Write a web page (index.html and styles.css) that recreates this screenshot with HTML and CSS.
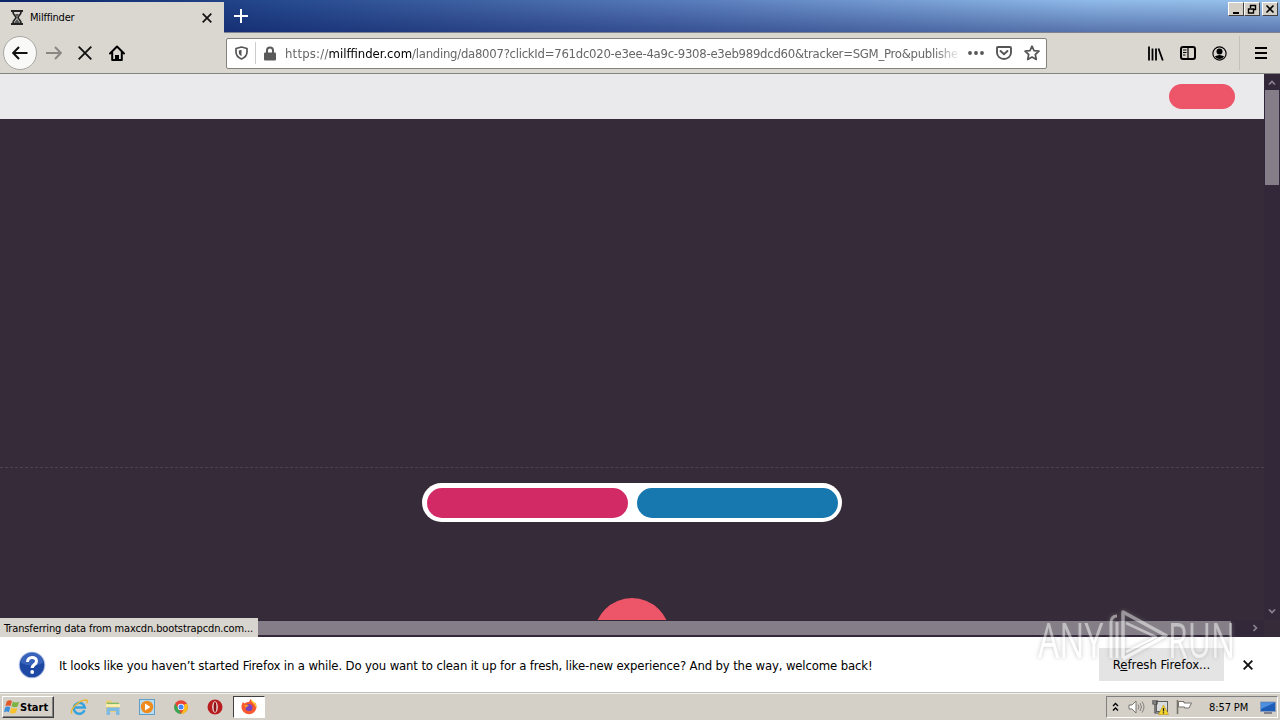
FILE: index.html
```html
<!DOCTYPE html>
<html lang="en">
<head>
    <meta charset="UTF-8">
    <title>Milffinder</title>
    <link rel="stylesheet" href="styles.css">
</head>
<body>
    <div class="titlebar">
        <div class="tab">
            <svg class="tab-icon" width="12" height="15" viewBox="0 0 12 15"><path d="M0 1h12M0 14h12" stroke="#222" stroke-width="2"/><path d="M2 2c0 3 3 4 3 5.500S2 10 2 13M10 2c0 3-3 4-3 5.500s3 2.500 3 5.500" fill="none" stroke="#222" stroke-width="1.700"/><path d="M4 4h4L6 7zM6 9l3 4H3z" fill="#555"/></svg>
            <span class="tab-title">Milffinder</span>
            <svg width="10" height="10" viewBox="0 0 10 10"><path d="M.7.7l8.600 8.600M9.300.7L.7 9.300" stroke="#111" stroke-width="1.700"/></svg>
        </div>
        <svg class="new-tab" width="14" height="14" viewBox="0 0 14 14"><path d="M7 0v14M0 7h14" stroke="#fff" stroke-width="2"/></svg>
        <div class="window-buttons">
            <span class="win-btn"><svg width="11" height="10" viewBox="0 0 11 10"><path d="M3 9h6" stroke="#000" stroke-width="2"/></svg></span>
            <span class="win-btn"><svg width="11" height="10" viewBox="0 0 11 10"><path d="M4.500 4V1.500h5v4H8M4 1.500h6M2.500 5h5v4h-5zM2 5h6" fill="none" stroke="#000" stroke-width="1.400"/></svg></span>
            <span class="win-btn close"><svg width="11" height="10" viewBox="0 0 11 10"><path d="M2.500 1.500l7 7M9.500 1.500l-7 7" stroke="#000" stroke-width="1.600"/></svg></span>
        </div>
    </div>

    <div class="toolbar">
        <span class="back"><svg width="16" height="14" viewBox="0 0 16 14"><path d="M15.500 7H1.500M7 1L1.200 7 7 13" fill="none" stroke="#111" stroke-width="2"/></svg></span>
        <svg class="forward" width="16" height="14" viewBox="0 0 16 14"><path d="M0 7h14.500M9 1l5.800 6L9 13" fill="none" stroke="#8a8884" stroke-width="1.900"/></svg>
        <svg class="stop" width="14" height="14" viewBox="0 0 14 14"><path d="M.7.7l12.600 12.600M13.300.7L.7 13.300" stroke="#111" stroke-width="1.900"/></svg>
        <svg class="home" width="16" height="16" viewBox="0 0 16 16"><path d="M1 8.500L8 1.500l7 7M3.200 7.500V15h9.600V7.500" fill="none" stroke="#000" stroke-width="2" stroke-linejoin="round" stroke-linecap="round"/><path d="M6 15v-5h4v5z"/></svg>
        <div class="urlbar">
            <svg width="13" height="14" viewBox="0 0 13 14"><path d="M6.500 1L12 2.500v3.500c0 3.500-2 5.500-5.500 7C3 11.500 1 9.500 1 6V2.500z" fill="none" stroke="#555" stroke-width="1.700" stroke-linejoin="round"/><path d="M6.500 3.700v6.500C4.500 9 3.800 8 3.800 6V4.400z" fill="#555"/></svg>
            <span class="url-sep"></span>
            <svg width="12" height="15" viewBox="0 0 12 15"><path d="M3 7V4.500a3 3 0 0 1 6 0V7" fill="none" stroke="#5a5a5a" stroke-width="2"/><rect y="6.500" width="12" height="8" rx="1" fill="#5a5a5a"/></svg>
            <span class="url"><i>https://</i><b>milffinder.com</b>/landing/da8007?clickId=761dc020-e3ee-4a9c-9308-e3eb989dcd60&amp;tracker=SGM_Pro&amp;publishe</span>
            <svg width="16" height="4" viewBox="0 0 16 4"><g fill="#555"><circle cx="2" cy="2" r="1.900"/><circle cx="8" cy="2" r="1.900"/><circle cx="14" cy="2" r="1.900"/></g></svg>
            <svg width="16" height="14" viewBox="0 0 16 14"><path d="M2 1h12q1 0 1 1v4.500a7 6.500 0 0 1-14 0V2q0-1 1-1z" fill="none" stroke="#555" stroke-width="1.900"/><path d="M4.500 5L8 8.300 11.500 5" fill="none" stroke="#555" stroke-width="1.900" stroke-linecap="round"/></svg>
            <svg width="16" height="16" viewBox="0 0 16 16"><path d="M8 1.200l2 4.500 5 .5-3.700 3.300 1 5L8 12l-4.300 2.500 1-5L1 6.200l5-.5z" fill="none" stroke="#555" stroke-width="1.700" stroke-linejoin="round"/></svg>
        </div>
        <div class="tools">
            <svg width="16" height="15" viewBox="0 0 16 15"><path d="M1 .5v14M4.500 2.500v12M8 2.500v12M10.500 2.500l4.300 12" stroke="#000" stroke-width="1.800"/></svg>
            <svg width="16" height="14" viewBox="0 0 16 14"><rect x="1" y="1" width="14" height="12" rx="2" fill="none" stroke="#000" stroke-width="2"/><path d="M8 1v12M3 4h3.500M3 6.500h3.500M3 9h2.500" stroke="#000" stroke-width="1.200"/></svg>
            <svg width="15" height="15" viewBox="0 0 15 15"><circle cx="7.500" cy="7.500" r="6.600" fill="none" stroke="#000" stroke-width="1.200"/><circle cx="7.500" cy="5.500" r="3"/><path d="M2.800 10.500q4.700-3 9.400 0-2 2.500-4.700 2.500t-4.700-2.500z"/></svg>
            <span class="tool-sep"></span>
            <svg width="12" height="12" viewBox="0 0 12 12"><path d="M0 1h12M0 6h12M0 11h12" stroke="#000" stroke-width="2"/></svg>
        </div>
    </div>

    <div class="viewport">
        <div class="page">
            <div class="page-header"><span class="login"></span></div>
            <div class="hero"></div>
            <div class="choice"><span class="women"></span><span class="men"></span></div>
            <div class="round"></div>
        </div>
        <div class="vscroll">
            <svg width="8" height="5" viewBox="0 0 8 5"><path d="M1 4.500l3-3 3 3" fill="none" stroke="#8b8590" stroke-width="1.600"/></svg>
            <div class="vthumb"></div>
            <svg class="down" width="8" height="5" viewBox="0 0 8 5"><path d="M1 .5l3 3 3-3" fill="none" stroke="#8b8590" stroke-width="1.600"/></svg>
        </div>
        <div class="hscroll">
            <div class="hthumb"></div>
            <svg width="5" height="8" viewBox="0 0 5 8"><path d="M.5 1l3 3-3 3" fill="none" stroke="#8b8590" stroke-width="1.600"/></svg>
        </div>
        <div class="status">Transferring data from maxcdn.bootstrapcdn.com...</div>
    </div>

    <div class="notification">
        <svg width="28" height="28" viewBox="0 0 28 28"><circle cx="14" cy="14" r="13.300" fill="#b9c6e4"/><circle cx="14" cy="14" r="12.300" fill="#1d48a4"/><path d="M3 12a11 11 0 0 1 22 0q-11 5-22 0z" fill="#4a76cc" opacity=".6"/><path d="M9.500 11c0-6 9-6 9-.8 0 3.300-4.300 3.300-4.300 6.800" fill="none" stroke="#fff" stroke-width="3"/><circle cx="14.200" cy="21" r="1.900" fill="#fff"/></svg>
        <span class="message">It looks like you haven’t started Firefox in a while. Do you want to clean it up for a fresh, like-new experience? And by the way, welcome back!</span>
        <span class="refresh">R<u>e</u>fresh Firefox...</span>
        <svg class="dismiss" width="10" height="10" viewBox="0 0 10 10"><path d="M.7.7l8.600 8.600M9.300.7L.7 9.300" stroke="#111" stroke-width="1.900"/></svg>
    </div>

    <div class="taskbar">
        <div class="start">
            <svg width="16" height="16" viewBox="0 0 17 16"><path d="M3 2q3-2 5.500-.3L7 7Q4 5.500 1.500 7.200z" fill="#e4572a"/><path d="M9.500 2.200Q12 4 16 2.500L14.500 7.500Q11 9 8 7.200z" fill="#7cb342"/><path d="M1.200 8.500Q4 6.700 6.700 8.300L5.200 13.500Q3 12 0 13.500z" fill="#3c8fd8"/><path d="M7.700 8.700q3.300 1.500 6.500.2l-1.500 5Q9.500 16 6.300 14z" fill="#f8c22c"/></svg>
            <span>Start</span>
        </div>
        <div class="launch">
            <svg width="18" height="18" viewBox="0 0 18 18"><path d="M14.500 12.300A5.500 5.500 0 1 1 14.800 9.500H5" fill="none" stroke="#37a3de" stroke-width="2.500"/><path d="M2 15.500C-1 13 8 2 16 2c2 0 1.500 2 .5 3.500" fill="none" stroke="#e9b52c" stroke-width="1.300"/></svg>
            <svg width="18" height="18" viewBox="0 0 18 18"><path d="M2 2.500h5l1 2h7V14H2z" fill="#e8cd71"/><path d="M3 5.500h12" stroke="#7fb96a" stroke-width="1.500"/><path d="M2 7.500h14" stroke="#fff0b3" stroke-width="2.500"/><path d="M2.500 9.500h13V17H12v-4H6v4H2.500z" fill="#7dbbe4"/></svg>
            <svg width="18" height="18" viewBox="0 0 18 18"><rect x="1.500" y="1.500" width="15" height="15" fill="#b8dcf2" stroke="#5d9fc8"/><circle cx="9" cy="9" r="6.200" fill="#ef8a1c"/><path d="M7 5.500l5.500 3.500L7 12.500z" fill="#fff"/></svg>
            <svg width="18" height="18" viewBox="0 0 18 18"><circle cx="9" cy="9" r="6.800" fill="#e84435"/><path d="M3.100 5.600L7 12l2 3.800A6.800 6.800 0 0 1 3.100 5.600z" fill="#34a853"/><path d="M9 15.800L12 11l.5-5h2.600A6.800 6.800 0 0 1 9 15.800z" fill="#fbc116"/><circle cx="9" cy="9" r="3.300" fill="#fff"/><circle cx="9" cy="9" r="2.500" fill="#4285f4"/></svg>
            <svg width="18" height="18" viewBox="0 0 18 18"><circle cx="9" cy="9" r="7.500" fill="#b81d20"/><ellipse cx="9" cy="9" rx="2.800" ry="5.700" fill="#f0e3e1"/><ellipse cx="9" cy="9" rx="1.400" ry="5" fill="#8d1316"/></svg>
            <span class="active-app"><svg width="18" height="18" viewBox="0 0 18 18"><path d="M2 6l1-2 1.500 1.500C6 4 8 4 9 4l1.500-3 3 3.500 2 .5A7.500 7.500 0 1 1 2 6z" fill="#f9592f"/><path d="M10.500 1q.5 3 4 5.500l2 4q0-5-3-7z" fill="#ffd238"/><circle cx="9" cy="9.500" r="3.500" fill="#7543c3"/><path d="M4 7q3-1 5 1-3 0-3 2.500" fill="#ff9a22"/></svg></span>
        </div>
        <div class="tray">
            <svg width="7" height="10" viewBox="0 0 7 10"><path d="M1 4l2.500-2.500L6 4M1 8.500L3.500 6 6 8.500" fill="none" stroke="#000" stroke-width="1.400"/></svg>
            <svg class="volume" width="17" height="14" viewBox="0 0 17 14"><path d="M1 5h3l4-4v12L4 9H1z" fill="#fff" stroke="#77736d"/><path d="M10 4.500q2 2.500 0 5M12 3q3 4 0 8M14 1.500q4 5.500 0 11" fill="none" stroke="#85817b"/></svg>
            <svg class="network" width="17" height="16" viewBox="0 0 17 16"><rect x="4.500" y="2.500" width="11" height="10" fill="#d9dcdd" stroke="#5e5e5e"/><path d="M1 1v4h4V1M3 5v9h5M3 1v3" fill="none" stroke="#444" stroke-width="1.200"/><path d="M11.500 6l5 9.500h-10z" fill="#f9d62c" stroke="#b59613" stroke-width=".6"/><path d="M11.500 9v3.500M11.500 13.300v1.200" stroke="#222" stroke-width="1.300"/></svg>
            <svg class="flag" width="17" height="16" viewBox="0 0 17 16"><path d="M1.500 1v14" stroke="#77736d" stroke-width="1.600"/><path d="M2.500 2.500H8V4h7.500l-2.500 5H8.500V8h-6z" fill="#fff" stroke="#77736d"/></svg>
            <span class="clock">8:57 PM</span>
            <svg width="16" height="13" viewBox="0 0 16 13"><path d="M.5 1h15v9.500H.5z" fill="#1d5cb7" stroke="#879db9"/><path d="M1 1.500h14L1 8z" fill="#4c8fdf"/><path d="M4 12h8" stroke="#667" stroke-width="1.500"/></svg>
        </div>
    </div>

    <div class="watermark">
        <span class="any">ANY</span>
        <svg width="60" height="62" viewBox="0 0 60 62"><path d="M3 50V15q0-7 6-7M9 50V14" fill="none" stroke="#fff" stroke-width="3"/><path d="M15 50V4l43 23.500L15 51" fill="none" stroke="#fff" stroke-width="3.500" stroke-linejoin="round"/><path d="M18 15l30 14-30 15" fill="none" stroke="#fff" stroke-width="2.500" stroke-linejoin="round"/></svg>
        <span class="run">RUN</span>
    </div>
</body>
</html>
```
FILE: styles.css
```css
* {
    box-sizing: border-box;
}

body {
    position: relative;
    display: flex;
    flex-direction: column;
    width: 1280px;
    height: 720px;
    margin: 0;
    overflow: hidden;
    font-family: "DejaVu Sans Condensed", "DejaVu Sans", sans-serif;
    font-stretch: condensed;
    font-size: 11px;
    color: #000;
    background: #d4d0c8;
}

svg {
    display: block;
    flex: none;
}

.titlebar {
    display: flex;
    align-items: flex-start;
    height: 33px;
    border-bottom: 1px solid #7d8490;
    background: linear-gradient(transparent, rgba(10, 20, 90, 0.42)), linear-gradient(90deg, #0a246a, #264a8e 22%, #5b7fbd 55%, #8fbae8 85%, #98c2ec);
}

.tab {
    display: flex;
    align-items: center;
    width: 224px;
    height: 31px;
    margin-top: 2px;
    padding: 0 12px 0 11px;
    background: #dad7d1;
}

.tab-title {
    flex: 1;
    margin-left: 7px;
    letter-spacing: -0.2px;
}

.new-tab {
    margin: 9px 0 0 10px;
}

.window-buttons {
    display: flex;
    margin: 2px 2px 0 auto;
}

.win-btn {
    width: 16px;
    height: 14px;
    padding: 1px;
    border: 1px solid;
    border-color: #fff #404040 #404040 #fff;
    background: #d4d0c8;
}

.win-btn.close {
    margin-left: 2px;
}

.toolbar {
    display: flex;
    align-items: center;
    height: 41px;
    padding-left: 3px;
    border-bottom: 1px solid #848480;
    background: #dad7d1;
}

.back {
    display: flex;
    align-items: center;
    justify-content: center;
    width: 34px;
    height: 34px;
    border: 1px solid #aaa7a2;
    border-radius: 50%;
    background: #f9f9f8;
}

.forward {
    margin-left: 9px;
}

.stop {
    margin-left: 16px;
}

.home {
    margin-left: 17px;
}

.urlbar {
    display: flex;
    align-items: center;
    width: 821px;
    height: 31px;
    margin-left: 101px;
    padding: 0 0 0 8px;
    border: 1px solid #84827d;
    border-radius: 2px;
    background: #fff;
}

.url-sep {
    width: 1px;
    height: 22px;
    margin: 0 8px 0 7px;
    background: #ccc;
}

.url {
    flex: none;
    width: 676px;
    margin: 0 7px 0 9px;
    overflow: hidden;
    white-space: nowrap;
    font-size: 13px;
    letter-spacing: -0.27px;
    color: #666;
    mask-image: linear-gradient(90deg, #000 96%, transparent);
}

.url i {
    font-style: normal;
    letter-spacing: 0.2px;
}

.url b {
    font-weight: normal;
    letter-spacing: 0;
    color: #000;
}

.urlbar svg + svg {
    margin-left: 12px;
}

.tools {
    display: flex;
    align-items: center;
    gap: 16px;
    margin-left: 101px;
}

.tool-sep {
    width: 1px;
    height: 34px;
    margin: 0 -1px 0 -4px;
    background: #c4c1ba;
}

.viewport {
    position: relative;
    display: grid;
    grid-template-columns: 1264px 16px;
    grid-template-rows: 546px 17px;
    height: 563px;
    background: #362b39;
}

.page {
    overflow: hidden;
    background: #362b39;
}

.page-header {
    display: flex;
    justify-content: flex-end;
    height: 45px;
    padding: 10px 29px 0 0;
    background: #eaeaed;
}

.login {
    width: 66px;
    height: 25px;
    border-radius: 13px;
    background: #ed5568;
}

.hero {
    height: 349px;
    border-bottom: 1px dashed #4c4350;
}

.choice {
    display: flex;
    justify-content: space-between;
    width: 420px;
    height: 39px;
    margin: 15px auto 0;
    padding: 5px 4px 4px 5px;
    border-radius: 20px;
    background: #fff;
}

.choice span {
    width: 201px;
    border-radius: 15px;
}

.women {
    background: #d22a64;
}

.men {
    background: #1777af;
}

.round {
    width: 76px;
    height: 76px;
    margin: 76px auto 0;
    border-radius: 50%;
    background: #ed5568;
}

.vscroll {
    display: flex;
    flex-direction: column;
    align-items: center;
    padding: 6px 0;
    background: #32283a;
}

.vthumb {
    width: 14px;
    height: 95px;
    margin-top: 5px;
    background: #857e88;
}

.down {
    margin-top: auto;
}

.hscroll {
    display: flex;
    align-items: center;
    justify-content: space-between;
    padding: 0 6px 1px 0;
    background: #32283a;
}

.hthumb {
    width: 1231px;
    height: 14px;
    background: #857e88;
}

.status {
    position: absolute;
    left: 0;
    bottom: 0;
    width: 258px;
    height: 19px;
    padding-left: 4px;
    line-height: 21px;
    letter-spacing: -0.13px;
    white-space: nowrap;
    background: #d8d4ce;
}

.notification {
    display: flex;
    align-items: center;
    height: 56px;
    padding-left: 18px;
    background: #fff;
    border-bottom: 1px solid #bfbfbb;
}

.message {
    width: 1040px;
    margin-left: 13px;
    padding-top: 1px;
    font-size: 13px;
    letter-spacing: -0.14px;
    white-space: nowrap;
}

.refresh {
    width: 125px;
    height: 33px;
    line-height: 33px;
    text-align: center;
    font-size: 13px;
    background: #e4e4e4;
}

.dismiss {
    margin-left: 19px;
}

.taskbar {
    display: flex;
    align-items: center;
    height: 27px;
    padding: 0 2px;
    border-top: 1px solid #f4f2ee;
    background: #d4d0c8;
}

.start {
    display: flex;
    align-items: center;
    width: 52px;
    height: 22px;
    padding-left: 1px;
    border: 1px solid;
    border-color: #fff #404040 #404040 #fff;
    box-shadow: inset -1px -1px #808080;
    font-weight: bold;
}

.launch {
    display: flex;
    align-items: center;
    gap: 16px;
    margin-left: 16px;
}

.active-app {
    display: flex;
    align-items: center;
    justify-content: center;
    width: 32px;
    height: 22px;
    margin-left: -7px;
    border: 1px solid;
    border-color: #404040 #fff #fff #404040;
    background: #fff;
}

.tray {
    display: flex;
    align-items: center;
    height: 22px;
    width: 172px;
    margin-left: auto;
    padding-left: 5px;
    border: 1px solid;
    border-color: #808080 #fff #fff #808080;
}

.volume {
    margin-left: 9px;
}

.network,
.flag {
    margin-left: 7px;
}

.clock {
    width: 40px;
    margin: 0 11px 0 16px;
    letter-spacing: -0.1px;
    white-space: nowrap;
}

.watermark {
    position: absolute;
    left: 1038px;
    top: 608px;
    display: flex;
    align-items: center;
    height: 62px;
    font-family: "Open Sans", sans-serif;
    font-stretch: normal;
    font-size: 50px;
    line-height: 62px;
    color: #fff;
    opacity: 0.5;
    filter: drop-shadow(0 0 2px #888);
}

.watermark span {
    transform-origin: left;
}

.any {
    width: 70px;
    transform: scaleX(0.67);
}

.run {
    width: 62px;
    transform: scaleX(0.64);
}
```
